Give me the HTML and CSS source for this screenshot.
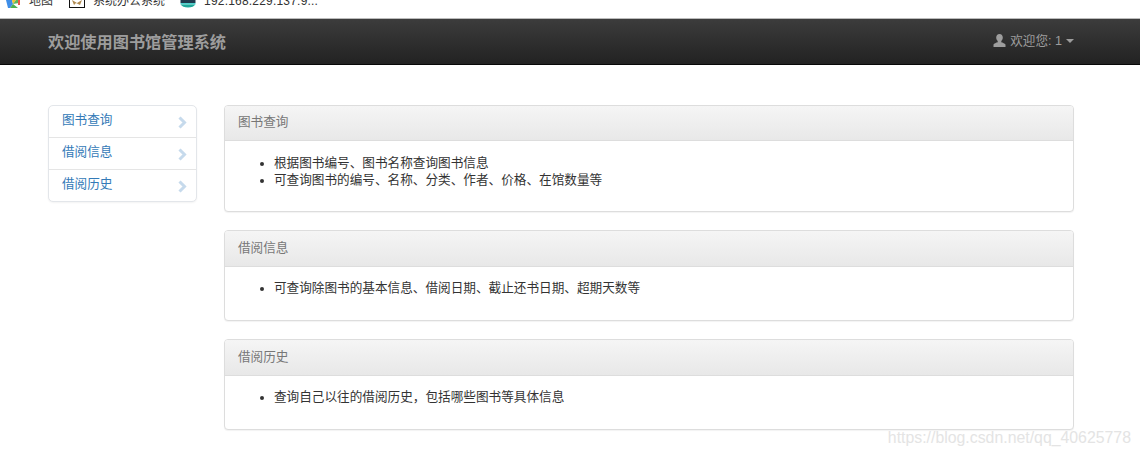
FILE: index.html
```html
<!DOCTYPE html>
<html lang="zh">
<head>
<meta charset="utf-8">
<title>图书馆管理系统</title>
<link rel="stylesheet" href="styles.css">
</head>
<body>
<div class="bookmarks">
  <div class="bookmark">
    <svg class="bm-icon" width="16" height="16" viewBox="0 0 16 16"><path d="M0 8h6l1 4-3 4H2z" fill="#3f8ee8"/><path d="M7 12l-3 4h8z" fill="#4caf50"/><path d="M6 8h4l-3 4z" fill="#f2c232"/><path d="M10 8h3v3l-6 1z" fill="#5cb85c"/><path d="M12 8h2v5h-2z" fill="#ea5a4a"/></svg>
    <span>地图</span>
  </div>
  <div class="bookmark bm-second">
    <svg class="bm-icon" width="16" height="16" viewBox="0 0 16 16"><rect x="0.5" y="4" width="15" height="11.500" fill="#fff" stroke="#111"/><path d="M3 8l5 3 5-3-2 5-4-2-2 2z" fill="#b08a50"/></svg>
    <span>系统办公系统</span>
  </div>
  <div class="bookmark bm-third">
    <svg class="bm-icon" width="16" height="16" viewBox="0 0 16 16"><path d="M0.500 8h15v3H.5z" fill="#1f3a4d"/><path d="M.5 11h15v1.500H.5z" fill="#4fd0cd"/><path d="M.8 12.500h14.400A7.500 4 0 0 1 .8 12.500z" fill="#1ea89a"/></svg>
    <span class="bm-url">192.168.229.137:9...</span>
  </div>
</div>
<nav class="navbar">
  <div class="brand">欢迎使用图书馆管理系统</div>
  <div class="user">
    <svg class="user-icon" width="13" height="13" viewBox="0 0 13 13"><path d="M6.500 0C8.600 0 9.800 1.600 9.800 3.600c0 1.400-.6 2.700-1.500 3.400v1c0 .5 3.100 1 4.200 2.400V13H.5v-2.600C1.600 9 4.700 8.500 4.700 8V7C3.800 6.300 3.200 5 3.200 3.600 3.200 1.600 4.400 0 6.500 0z" fill="#9d9d9d"/></svg>
    <span>欢迎您: 1</span>
    <span class="caret"></span>
  </div>
</nav>
<main class="content">
  <aside class="side">
    <a class="side-item">图书查询<svg class="chev" width="9" height="13" viewBox="0 0 9 13"><path d="M1.500 1.500L6.500 6.500 1.500 11.500" fill="none" stroke="#c6daec" stroke-width="3"/></svg></a>
    <a class="side-item">借阅信息<svg class="chev" width="9" height="13" viewBox="0 0 9 13"><path d="M1.500 1.500L6.500 6.500 1.500 11.500" fill="none" stroke="#c6daec" stroke-width="3"/></svg></a>
    <a class="side-item">借阅历史<svg class="chev" width="9" height="13" viewBox="0 0 9 13"><path d="M1.500 1.500L6.500 6.500 1.500 11.500" fill="none" stroke="#c6daec" stroke-width="3"/></svg></a>
  </aside>
  <div class="panels">
    <section class="panel panel-a">
      <header class="panel-head">图书查询</header>
      <div class="panel-body">
        <ul>
          <li>根据图书编号、图书名称查询图书信息</li>
          <li>可查询图书的编号、名称、分类、作者、价格、在馆数量等</li>
        </ul>
      </div>
    </section>
    <section class="panel panel-b">
      <header class="panel-head">借阅信息</header>
      <div class="panel-body">
        <ul><li>可查询除图书的基本信息、借阅日期、截止还书日期、超期天数等</li></ul>
      </div>
    </section>
    <section class="panel panel-b">
      <header class="panel-head">借阅历史</header>
      <div class="panel-body">
        <ul><li>查询自己以往的借阅历史，包括哪些图书等具体信息</li></ul>
      </div>
    </section>
  </div>
</main>
<div class="watermark">https://blog.csdn.net/qq_40625778</div>
</body>
</html>
```
FILE: styles.css
```css
* { box-sizing: border-box; }
html, body { margin: 0; padding: 0; }
body {
  width: 1140px;
  height: 456px;
  overflow: hidden;
  position: relative;
  background: #fff;
  color: #333;
  font-family: "Liberation Sans", "Noto Sans CJK SC", sans-serif;
  font-size: 12.64px;
  line-height: 17px;
}
.bookmarks {
  height: 18px;
  display: flex;
  align-items: flex-end;
  padding: 0 0 9px 6px;
  overflow: hidden;
  font-size: 12px;
  color: #333;
}
.bookmark { display: flex; align-items: center; gap: 7px; height: 16px; flex: none; }
.bm-second { margin-left: 16px; }
.bm-second span { margin-left: 1px; }
.bm-third { margin-left: 15px; }
.bm-icon { flex: none; margin-top: -2px; }
.bm-url { margin-left: 1px; letter-spacing: .2px; }
.navbar {
  height: 47px;
  display: flex;
  align-items: center;
  justify-content: space-between;
  padding: 0 66px 0 48px;
  background: linear-gradient(#3c3c3c, #222);
  border-top: 1px solid #bbb;
  border-bottom: 1px solid #080808;
}
.brand { font-size: 16.2px; font-weight: 700; color: #9d9d9d; line-height: 20px; }
.user { display: flex; align-items: center; color: #9d9d9d; font-size: 12.6px; }
.user-icon { margin-right: 4px; margin-top: -3px; }
.caret {
  width: 0; height: 0; margin-left: 4px; margin-top: -1px;
  border-top: 4px solid #9d9d9d;
  border-left: 4px solid transparent;
  border-right: 4px solid transparent;
}
.content { display: flex; align-items: flex-start; padding: 40px 66px 0 48px; gap: 27px; }
.side {
  width: 149px;
  flex: none;
  border: 1px solid #e3e6ea;
  border-radius: 5px;
  box-shadow: 0 1px 2px rgba(0,0,0,.05);
  background: #fff;
}
.side-item {
  height: 32px;
  display: flex;
  align-items: center;
  justify-content: space-between;
  padding: 0 9px 3px 13px;
  color: #337ab7;
  border-bottom: 1px solid #e5e5e5;
}
.side-item:last-child { border-bottom: 0; height: 31px; }
.chev { margin-top: 5px; }
.panels { flex: 1; display: flex; flex-direction: column; gap: 18px; }
.panel {
  border: 1px solid #ddd;
  border-radius: 4px;
  box-shadow: 0 1px 1px rgba(0,0,0,.05);
  overflow: hidden;
  background: #fff;
}
.panel-head {
  height: 36px;
  display: flex;
  align-items: center;
  padding: 0 13px;
  color: #777;
  background: linear-gradient(#f5f5f5, #e8e8e8);
  border-bottom: 1px solid #ddd;
}
.panel-body { padding: 13px 13px 0; height: 53px; }
.panel-a .panel-head { height: 35px; padding-bottom: 2px; }
.panel-a .panel-body { padding-top: 14px; height: 70px; }
ul { margin: 0; padding: 0 0 0 36px; }
.watermark {
  position: absolute;
  right: 9px;
  top: 429px;
  font-size: 15.85px;
  line-height: 18px;
  color: #e4e4e4;
}
```
